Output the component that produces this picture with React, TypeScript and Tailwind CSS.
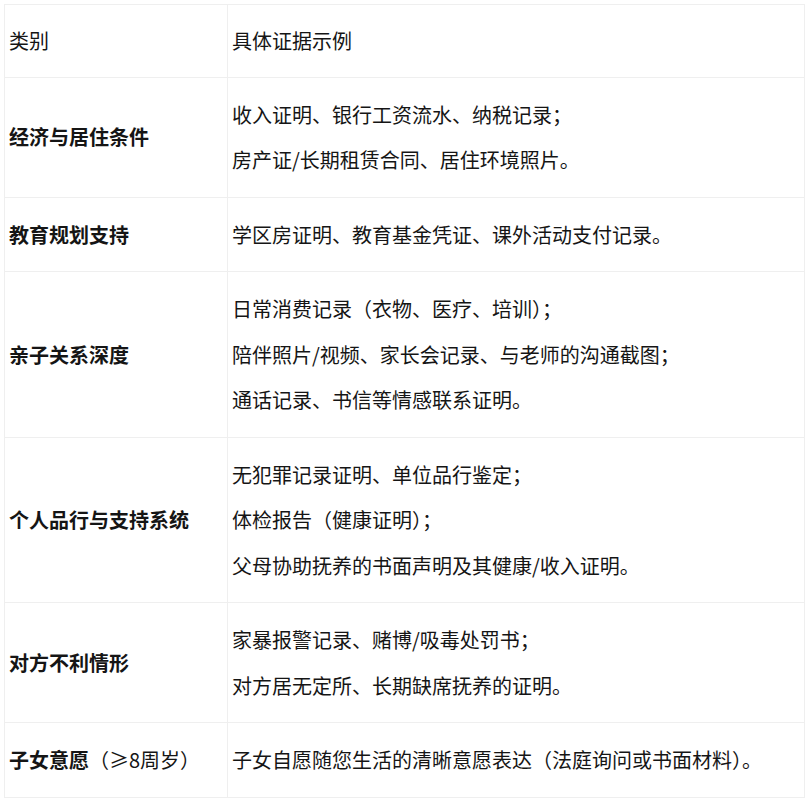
import React from 'react';

interface Row {
  category: React.ReactNode;
  lines: string[];
}

const rows: Row[] = [
  {
    category: <strong className="font-bold">经济与居住条件</strong>,
    lines: ['收入证明、银行工资流水、纳税记录；', '房产证/长期租赁合同、居住环境照片。'],
  },
  {
    category: <strong className="font-bold">教育规划支持</strong>,
    lines: ['学区房证明、教育基金凭证、课外活动支付记录。'],
  },
  {
    category: <strong className="font-bold">亲子关系深度</strong>,
    lines: [
      '日常消费记录（衣物、医疗、培训）；',
      '陪伴照片/视频、家长会记录、与老师的沟通截图；',
      '通话记录、书信等情感联系证明。',
    ],
  },
  {
    category: <strong className="font-bold">个人品行与支持系统</strong>,
    lines: ['无犯罪记录证明、单位品行鉴定；', '体检报告（健康证明）；', '父母协助抚养的书面声明及其健康/收入证明。'],
  },
  {
    category: <strong className="font-bold">对方不利情形</strong>,
    lines: ['家暴报警记录、赌博/吸毒处罚书；', '对方居无定所、长期缺席抚养的证明。'],
  },
  {
    category: (
      <>
        <strong className="font-bold">子女意愿</strong>
        <span>（≥8周岁）</span>
      </>
    ),
    lines: ['子女自愿随您生活的清晰意愿表达（法庭询问或书面材料）。'],
  },
];

const cell = 'border border-[#efefef] px-[4px] align-middle text-left';

export default function App() {
  return (
    <div
      className="bg-white min-h-[800px] pt-[4px] pl-[4px] text-[#151515] text-[20px] leading-[45.5px]"
      style={{ fontFamily: '"Noto Sans CJK SC", "Noto Sans", sans-serif' }}
    >
      <table className="border-collapse w-[801px] table-fixed">
        <colgroup>
          <col className="w-[223px]" />
          <col />
        </colgroup>
        <thead>
          <tr>
            <th className={`${cell} py-[13px] font-normal`}>类别</th>
            <th className={`${cell} py-[13px] font-normal`}>具体证据示例</th>
          </tr>
        </thead>
        <tbody>
          {rows.map((row, i) => (
            <tr key={i}>
              <td className={`${cell} py-[14px] whitespace-nowrap`}>{row.category}</td>
              <td className={`${cell} py-[14px]`}>
                {row.lines.map((line, j) => (
                  <div key={j} className="whitespace-nowrap">
                    {line}
                  </div>
                ))}
              </td>
            </tr>
          ))}
        </tbody>
      </table>
    </div>
  );
}
